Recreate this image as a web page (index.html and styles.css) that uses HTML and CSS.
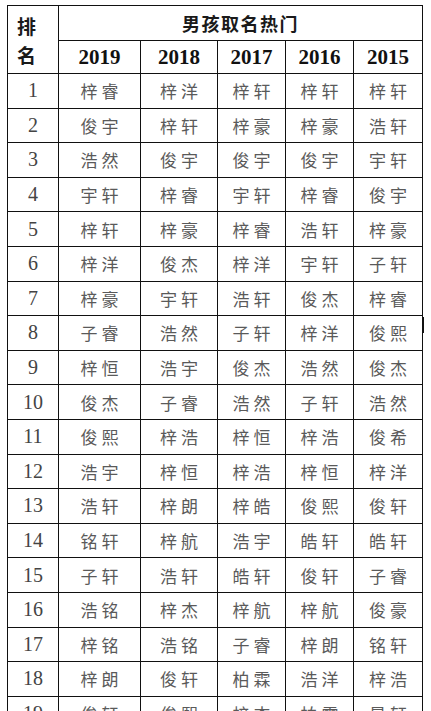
FILE: index.html
```html
<!DOCTYPE html>
<html lang="zh-CN">
<head>
<meta charset="utf-8">
<title>男孩取名热门</title>
<link rel="stylesheet" href="styles.css">
</head>
<body>
<div class="page">
<table class="names">
<colgroup>
<col class="c-rank"><col class="c-2019"><col class="c-2018"><col class="c-2017"><col class="c-2016"><col class="c-2015">
</colgroup>
<thead>
<tr class="r-title"><th class="rank-head" rowspan="2">排<br>名</th><th class="title" colspan="5">男孩取名热门</th></tr>
<tr class="r-year"><th class="year">2019</th><th class="year">2018</th><th class="year">2017</th><th class="year">2016</th><th class="year">2015</th></tr>
</thead>
<tbody>
<tr><td class="rank">1</td><td>梓睿</td><td>梓洋</td><td>梓轩</td><td>梓轩</td><td>梓轩</td></tr>
<tr><td class="rank">2</td><td>俊宇</td><td>梓轩</td><td>梓豪</td><td>梓豪</td><td>浩轩</td></tr>
<tr><td class="rank">3</td><td>浩然</td><td>俊宇</td><td>俊宇</td><td>俊宇</td><td>宇轩</td></tr>
<tr><td class="rank">4</td><td>宇轩</td><td>梓睿</td><td>宇轩</td><td>梓睿</td><td>俊宇</td></tr>
<tr><td class="rank">5</td><td>梓轩</td><td>梓豪</td><td>梓睿</td><td>浩轩</td><td>梓豪</td></tr>
<tr><td class="rank">6</td><td>梓洋</td><td>俊杰</td><td>梓洋</td><td>宇轩</td><td>子轩</td></tr>
<tr><td class="rank">7</td><td>梓豪</td><td>宇轩</td><td>浩轩</td><td>俊杰</td><td>梓睿</td></tr>
<tr><td class="rank">8</td><td>子睿</td><td>浩然</td><td>子轩</td><td>梓洋</td><td>俊熙</td></tr>
<tr><td class="rank">9</td><td>梓恒</td><td>浩宇</td><td>俊杰</td><td>浩然</td><td>俊杰</td></tr>
<tr><td class="rank">10</td><td>俊杰</td><td>子睿</td><td>浩然</td><td>子轩</td><td>浩然</td></tr>
<tr><td class="rank">11</td><td>俊熙</td><td>梓浩</td><td>梓恒</td><td>梓浩</td><td>俊希</td></tr>
<tr><td class="rank">12</td><td>浩宇</td><td>梓恒</td><td>梓浩</td><td>梓恒</td><td>梓洋</td></tr>
<tr><td class="rank">13</td><td>浩轩</td><td>梓朗</td><td>梓皓</td><td>俊熙</td><td>俊轩</td></tr>
<tr><td class="rank">14</td><td>铭轩</td><td>梓航</td><td>浩宇</td><td>皓轩</td><td>皓轩</td></tr>
<tr><td class="rank">15</td><td>子轩</td><td>浩轩</td><td>皓轩</td><td>俊轩</td><td>子睿</td></tr>
<tr><td class="rank">16</td><td>浩铭</td><td>梓杰</td><td>梓航</td><td>梓航</td><td>俊豪</td></tr>
<tr><td class="rank">17</td><td>梓铭</td><td>浩铭</td><td>子睿</td><td>梓朗</td><td>铭轩</td></tr>
<tr><td class="rank">18</td><td>梓朗</td><td>俊轩</td><td>柏霖</td><td>浩洋</td><td>梓浩</td></tr>
<tr><td class="rank">19</td><td>俊轩</td><td>俊熙</td><td>梓杰</td><td>柏霖</td><td>昊轩</td></tr>
</tbody>
</table>
<span class="mark"></span>
</div>
</body>
</html>
```
FILE: styles.css
```css
html, body {
  margin: 0;
  padding: 0;
  background: #fff;
}
body {
  overflow: hidden;
  height: 711px;
}
.page {
  position: relative;
  padding: 5px 0 0 7px;
}
.names {
  border-collapse: collapse;
  table-layout: fixed;
  width: 415px;
  font-family: "Liberation Serif", "Noto Sans CJK SC", serif;
}
.c-rank { width: 51px; }
.c-2019 { width: 82px; }
.c-2018 { width: 77px; }
.c-2017 { width: 68px; }
.c-2016 { width: 68px; }
.c-2015 { width: 69px; }
.names th, .names td {
  border: 1.5px solid #111;
  padding: 0;
  text-align: center;
  vertical-align: middle;
}
.r-title { height: 35px; }
.r-year { height: 33px; }
.names tbody tr { height: 34.6px; }
.rank-head {
  text-align: left !important;
  padding-left: 9px !important;
  font-family: "Noto Sans CJK SC", sans-serif;
  font-size: 19px;
  line-height: 29px;
  font-weight: 700;
  color: #1a1a1a;
}
.title {
  font-family: "Noto Sans CJK SC", sans-serif;
  font-size: 18px;
  font-weight: 700;
  letter-spacing: 1.5px;
  color: #1a1a1a;
}
.year {
  font-family: "Liberation Serif", serif;
  font-size: 21px;
  font-weight: 700;
  color: #111;
}
.names td {
  font-family: "Noto Sans CJK SC", sans-serif;
  font-size: 17px;
  font-weight: 400;
  letter-spacing: 4px;
  text-indent: 4px;
  color: #5a5a5a;
}
.names td.rank {
  font-family: "Liberation Serif", serif;
  font-size: 20px;
  letter-spacing: 0;
  text-indent: 0;
  color: #444;
}
.mark {
  position: absolute;
  left: 422px;
  top: 317px;
  width: 2px;
  height: 16px;
  background: #111;
}
```
